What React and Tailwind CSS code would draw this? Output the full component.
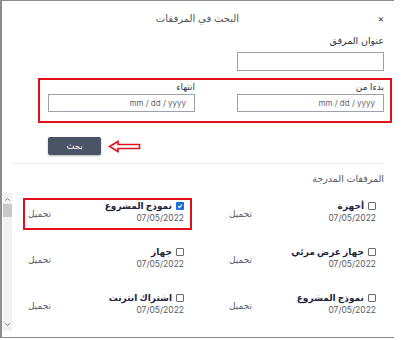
import React from "react";

const font = { fontFamily: '"Inter", "DejaVu Sans", sans-serif' };

function Box({ checked }) {
  return checked ? (
    <span className="inline-flex items-center justify-center w-[8px] h-[8px] rounded-[1px] bg-[#1a6fd8] shrink-0">
      <svg width="6" height="6" viewBox="0 0 6 6">
        <path d="M1 3.2 L2.4 4.6 L5 1.6" fill="none" stroke="#fff" strokeWidth="1.1" />
      </svg>
    </span>
  ) : (
    <span className="inline-block w-[8px] h-[8px] rounded-[1px] border border-[#6b6b6b] bg-white shrink-0" />
  );
}

function Item({ title, checked, side, highlight }) {
  const margin = side === "right" ? "ml-[26px] mr-0" : "ml-[11px] mr-[6px]";
  return (
    <div
      className={`${margin} h-[32px] border-2 ${
        highlight ? "border-[#e3101b]" : "border-transparent"
      } pr-[6px] pl-[3px] flex justify-between`}
    >
      <div className="flex flex-col items-start">
        <div className="flex items-center gap-[4px] h-[12px]">
          <Box checked={checked} />
          <span className="text-[9px] leading-[12px] font-bold text-[#1d2540]">{title}</span>
        </div>
        <span className="text-[8.5px] leading-[12px] text-[#555b66]" dir="ltr">07/05/2022</span>
      </div>
      <span className="self-center text-[9px] leading-[12px] text-[#555b66]">تحميل</span>
    </div>
  );
}

export default function App() {
  const rows = [
    [{ t: "أجهزة" }, { t: "نموذج المشروع", c: true, h: true }],
    [{ t: "جهاز عرض مرئي" }, { t: "جهاز" }],
    [{ t: "نموذج المشروع" }, { t: "اشتراك انترنت" }],
  ];
  return (
    <div className="w-[419px] h-[340px] bg-white overflow-hidden" style={font}>
      <div
        dir="rtl"
        className="w-[394px] h-[338px] border-l-2 border-t border-b border-[#8c8c8c] bg-white flex flex-col"
      >
        {/* header */}
        <div className="h-[34px] grid grid-cols-[1fr_auto_1fr] items-center pr-[10px] pl-[9px]">
          <span className="text-[10px] text-[#444] justify-self-start leading-none">×</span>
          <span className="text-[10px] text-[#555] leading-none">البحث في المرفقات</span>
          <span />
        </div>

        <div className="pr-[10px] pl-[9px] flex flex-col">
          <span className="text-[9.5px] leading-[12px] text-[#2b2f3a]">عنوان المرفق</span>
          <div className="mt-[5px] w-[147px] h-[19px] border border-[#9ca1ad] bg-white" />

          {/* date group */}
          <div className="mt-[7px] mr-[-8px] ml-[27px] border-2 border-[#e3101b] pt-[1px] pb-[9px] pr-[6px] pl-[8px] grid grid-cols-2 gap-x-[42px]">
            <div className="flex flex-col">
              <span className="text-[9px] leading-[11px] text-[#2b2f3a]">بدءا من</span>
              <div className="mt-[2px] h-[18px] border border-[#9ca1ad] flex items-center pr-[8px]">
                <span dir="ltr" className="text-[8px] text-[#5f6470]">mm / dd / yyyy</span>
              </div>
            </div>
            <div className="flex flex-col">
              <span className="text-[9px] leading-[11px] text-[#2b2f3a]">انتهاء</span>
              <div className="mt-[2px] h-[18px] border border-[#9ca1ad] flex items-center pr-[8px]">
                <span dir="ltr" className="text-[8px] text-[#5f6470]">mm / dd / yyyy</span>
              </div>
            </div>
          </div>

          {/* button + arrow */}
          <div dir="ltr" className="mt-[14px] pl-[37px] flex items-center gap-[7px]">
            <button className="w-[53px] h-[18px] rounded-[2px] bg-[#4b5366] text-white text-[8.5px] leading-none shadow-[0_1px_2px_rgba(0,0,0,0.3)]">
              بحث
            </button>
            <svg width="33" height="13" viewBox="0 0 33 13">
              <path
                d="M1.5 6.5 L10 1.5 L10 4.5 L31.5 4.5 L31.5 8.5 L10 8.5 L10 11.5 Z"
                fill="#fff"
                stroke="#e3101b"
                strokeWidth="1.6"
                strokeLinejoin="miter"
              />
            </svg>
          </div>

          <div className="mt-[8px] h-px bg-[#ececec]" />

          <span className="mt-[9px] text-[9.5px] leading-[12px] text-[#555]">المرفقات المدرجة</span>

          {/* list */}
          <div className="mt-[8px] ml-[-8px] h-[140px] flex">
            <div className="flex-1 grid grid-cols-2 content-start gap-y-[14px] pt-[5px]">
              {rows.map((r, i) => (
                <React.Fragment key={i}>
                  <Item side="right" title={r[0].t} checked={r[0].c} highlight={r[0].h} />
                  <Item side="left" title={r[1].t} checked={r[1].c} highlight={r[1].h} />
                </React.Fragment>
              ))}
            </div>
            <div className="w-[9px] h-[138px] bg-[#f1f1f1] flex flex-col items-center">
              <svg width="7" height="5" viewBox="0 0 7 5" className="mt-[4px]">
                <path d="M1.5 3.5 L3.5 1.5 L5.5 3.5" fill="none" stroke="#777" strokeWidth="1" />
              </svg>
              <div className="mt-[2px] w-[9px] h-[13px] bg-[#c9c9c9]" />
              <div className="flex-1" />
              <svg width="7" height="5" viewBox="0 0 7 5" className="mb-[4px]">
                <path d="M1.5 1.5 L3.5 3.5 L5.5 1.5" fill="none" stroke="#777" strokeWidth="1" />
              </svg>
            </div>
          </div>
        </div>
      </div>
    </div>
  );
}
